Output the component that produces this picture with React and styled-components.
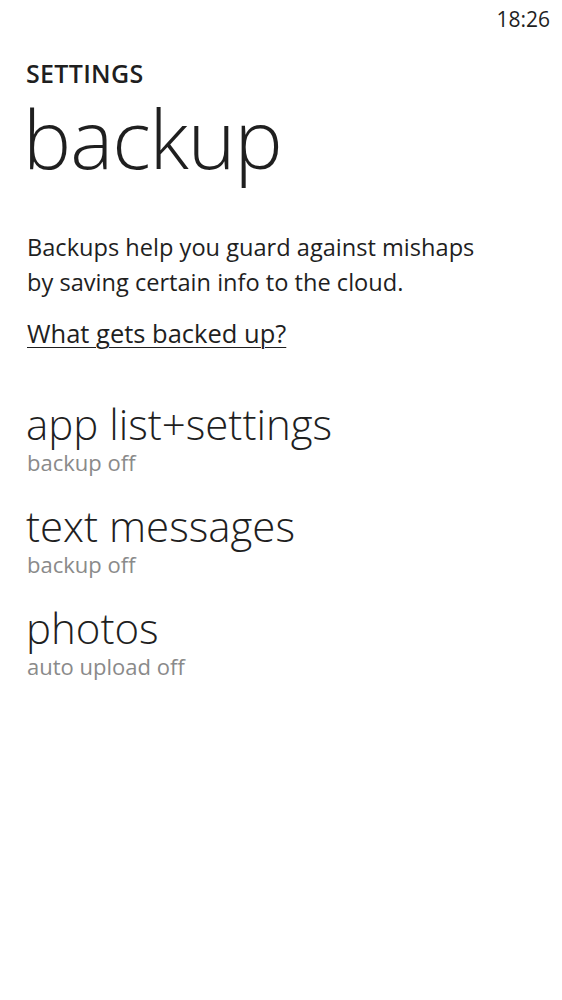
import React from 'react'
import styled, { createGlobalStyle } from 'styled-components'

const items = [
  { title: 'app list+settings', status: 'backup off' },
  { title: 'text messages', status: 'backup off' },
  { title: 'photos', status: 'auto upload off' },
]

function App() {
  return (
    <>
      <GlobalStyle />
      <Screen>
        <StatusBar>
          <Clock>18:26</Clock>
        </StatusBar>
        <Header>
          <AppTitle>SETTINGS</AppTitle>
          <PageTitle>backup</PageTitle>
        </Header>
        <Content>
          <Description>
            Backups help you guard against mishaps by saving certain info to the cloud.
          </Description>
          <HelpLink href="#">What gets backed up?</HelpLink>
          <List>
            {items.map((item) => (
              <Item key={item.title}>
                <ItemTitle>{item.title}</ItemTitle>
                <ItemStatus>{item.status}</ItemStatus>
              </Item>
            ))}
          </List>
        </Content>
      </Screen>
    </>
  )
}

export default App

const GlobalStyle = createGlobalStyle`
  html, body {
    margin: 0;
    padding: 0;
    background: #fff;
  }
  body {
    font-family: "Open Sans", "Noto Sans", sans-serif;
    color: #1f1f1f;
  }
`

const Screen = styled.div`
  width: 562px;
  min-height: 1000px;
  background: #fff;
  display: flex;
  flex-direction: column;
`

const StatusBar = styled.div`
  height: 38px;
  display: flex;
  justify-content: flex-end;
  align-items: center;
  padding: 0 12px 0 0;
`

const Clock = styled.span`
  font-size: 21px;
  font-weight: 400;
  color: #1f1f1f;
`

const Header = styled.div`
  display: flex;
  flex-direction: column;
  padding: 0 0 0 26px;
  margin-top: 20px;
`

const AppTitle = styled.div`
  font-size: 25px;
  font-weight: 600;
  line-height: 30px;
  letter-spacing: 0.3px;
`

const PageTitle = styled.h1`
  margin: 0 0 0 -3px;
  font-size: 81px;
  font-weight: 300;
  line-height: 100px;
  letter-spacing: -1px;
`

const Content = styled.div`
  display: flex;
  flex-direction: column;
  padding: 0 30px 0 27px;
  margin-top: 42px;
`

const Description = styled.p`
  margin: 0;
  font-size: 23.6px;
  line-height: 35px;
  width: 465px;
`

const HelpLink = styled.a`
  margin-top: 18px;
  align-self: flex-start;
  font-size: 25.5px;
  line-height: 30px;
  color: #1f1f1f;
  text-decoration: underline;
  text-underline-offset: 4px;
  text-decoration-thickness: 1px;
`

const List = styled.div`
  display: flex;
  flex-direction: column;
  margin-top: 49px;
  gap: 26px;
`

const Item = styled.div`
  display: flex;
  flex-direction: column;
`

const ItemTitle = styled.div`
  margin-left: -1px;
  font-size: 42px;
  font-weight: 300;
  line-height: 54px;
`

const ItemStatus = styled.div`
  font-size: 22px;
  line-height: 22px;
  color: #8a8a8a;
`
